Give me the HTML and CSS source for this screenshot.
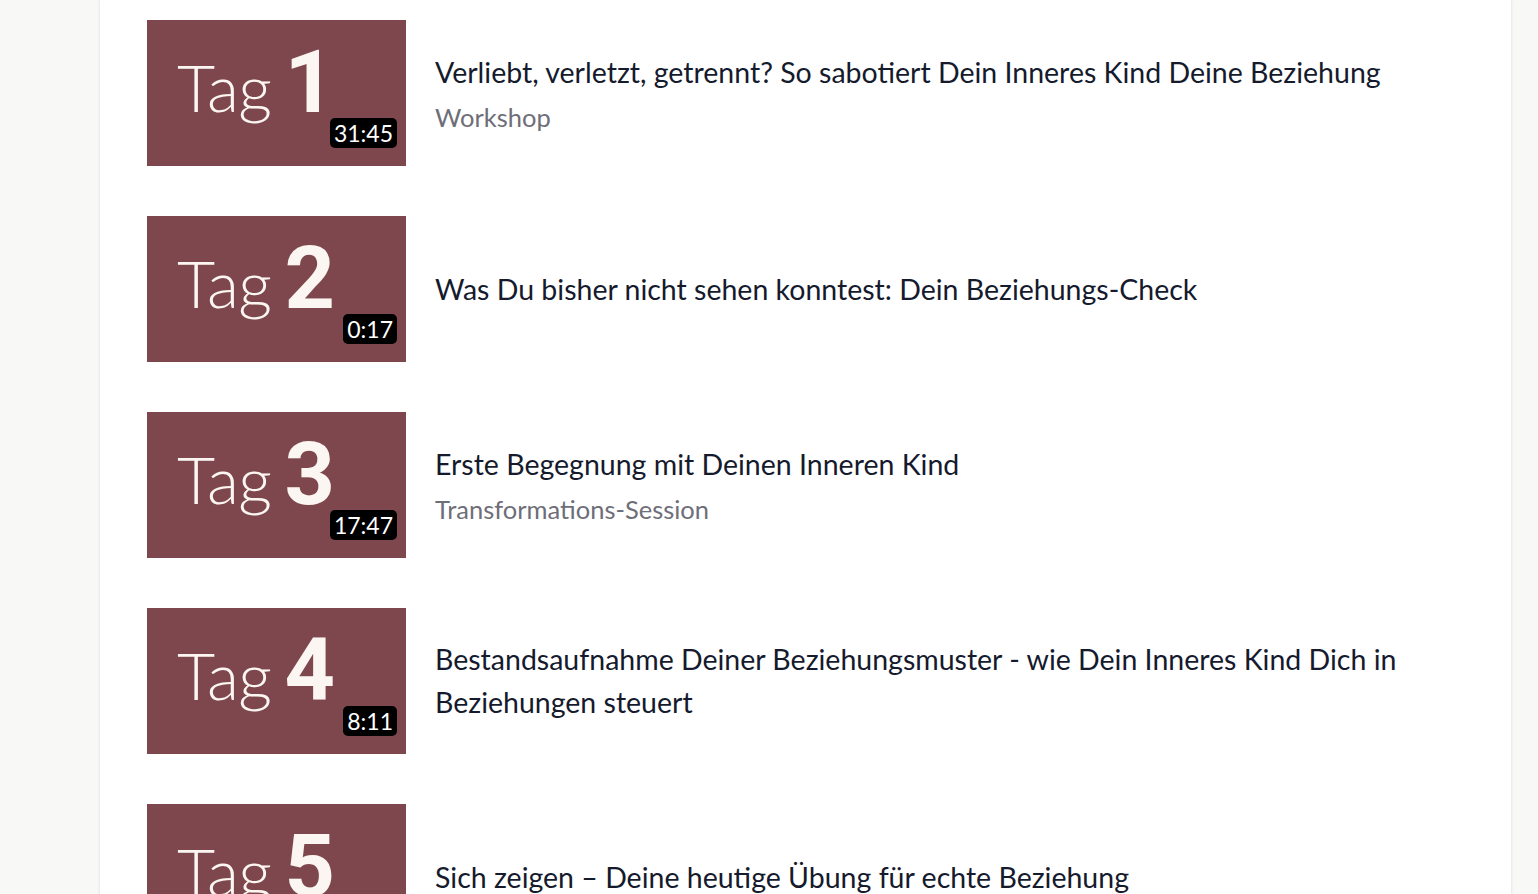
FILE: index.html
```html
<!DOCTYPE html>
<html lang="de">
<head>
<meta charset="utf-8">
<link rel="stylesheet" href="styles.css">
</head>
<body>
<div class="page">
  <div class="card">
    <div class="row">
      <div class="thumb"><span class="tag">Tag</span><span class="num">1</span><span class="dur">31:45</span></div>
      <div class="info">
        <div class="title">Verliebt, verletzt, getrennt? So sabotiert Dein Inneres Kind Deine Beziehung</div>
        <div class="sub">Workshop</div>
      </div>
    </div>
    <div class="row">
      <div class="thumb"><span class="tag">Tag</span><span class="num">2</span><span class="dur">0:17</span></div>
      <div class="info">
        <div class="title">Was Du bisher nicht sehen konntest: Dein Beziehungs-Check</div>
      </div>
    </div>
    <div class="row">
      <div class="thumb"><span class="tag">Tag</span><span class="num">3</span><span class="dur">17:47</span></div>
      <div class="info">
        <div class="title">Erste Begegnung mit Deinen Inneren Kind</div>
        <div class="sub">Transformations-Session</div>
      </div>
    </div>
    <div class="row">
      <div class="thumb"><span class="tag">Tag</span><span class="num">4</span><span class="dur">8:11</span></div>
      <div class="info">
        <div class="title">Bestandsaufnahme Deiner Beziehungsmuster - wie Dein Inneres Kind Dich in Beziehungen steuert</div>
      </div>
    </div>
    <div class="row">
      <div class="thumb"><span class="tag">Tag</span><span class="num">5</span><span class="dur">12:04</span></div>
      <div class="info">
        <div class="title">Sich zeigen – Deine heutige Übung für echte Beziehung</div>
      </div>
    </div>
  </div>
</div>
</body>
</html>
```

FILE: styles.css
```css
html, body {
  margin: 0;
  padding: 0;
  background: #f8f8f7;
  height: 894px;
  overflow: hidden;
}
.page {
  padding-left: 100px;
}
.card {
  width: 1411px;
  background: #ffffff;
  box-shadow: 0 0 3px rgba(0,0,0,0.12);
  padding: 20px 0 40px 47px;
  box-sizing: border-box;
  min-height: 1100px;
}
.row {
  display: flex;
  align-items: center;
  gap: 29px;
  margin-bottom: 50px;
}
.thumb {
  position: relative;
  flex: 0 0 259px;
  height: 146px;
  background: #7d474d;
  color: #fbf6f2;
  display: flex;
  align-items: baseline;
  padding: 2px 0 0 30px;
  box-sizing: border-box;
  overflow: hidden;
}
.tag {
  font-family: "Lato", sans-serif;
  font-weight: 300;
  font-size: 66px;
  line-height: 120px;
  letter-spacing: -0.5px;
}
.num {
  font-family: "Roboto", sans-serif;
  font-weight: 700;
  font-size: 88px;
  margin-left: 13px;
  line-height: 120px;
}
.dur {
  position: absolute;
  right: 9px;
  bottom: 18px;
  background: #000;
  color: #fff;
  font-family: "Lato", sans-serif;
  font-size: 23px;
  line-height: 30px;
  padding: 0 4px;
  border-radius: 5px;
}
.info {
  font-family: "Lato", sans-serif;
  padding-right: 60px;
}
.title {
  font-size: 28.5px;
  line-height: 43px;
  color: #151a2d;
}
.sub {
  margin-top: 5px;
  font-size: 25.5px;
  line-height: 36px;
  color: #6e6e78;
}
```
